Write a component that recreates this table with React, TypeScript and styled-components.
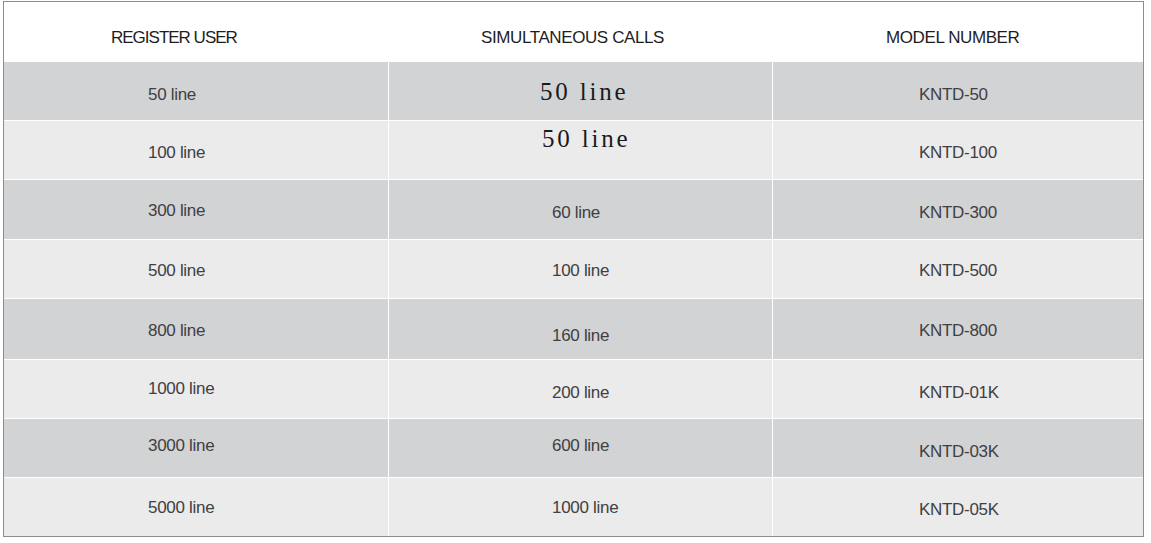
import { FC } from "react";
import styled, { createGlobalStyle } from "styled-components";

const GlobalStyle = createGlobalStyle`
  html, body {
    margin: 0;
    padding: 0;
    background: #ffffff;
  }
`;

type Tone = "dark" | "light";

const Page = styled.div({
  padding: "1px 0 0 3px",
});

const Table = styled.div({
  display: "grid",
  gridTemplateColumns: "384px 383px 370px",
  gridTemplateRows: "59px 58px 58px 59px 58px 60px 58px 58px 58px",
  gap: 1,
  width: 1139,
  backgroundColor: "#ffffff",
  border: "1px solid #8d8d8d",
});

const HeaderCell = styled.div<{ $left: number; $spacing: number }>(
  ({ $left, $spacing }) => ({
    display: "flex",
    alignItems: "flex-start",
    paddingTop: 26,
    paddingLeft: $left,
    backgroundColor: "#ffffff",
    fontFamily: '"Liberation Sans", Arial, sans-serif',
    fontSize: 17,
    lineHeight: "20px",
    letterSpacing: $spacing,
    color: "#1d1d1f",
    whiteSpace: "nowrap",
  })
);

const Cell = styled.div<{ $tone: Tone; $top: number; $left: number }>(
  ({ $tone, $top, $left }) => ({
    display: "flex",
    alignItems: "flex-start",
    paddingTop: $top,
    paddingLeft: $left,
    backgroundColor: $tone === "dark" ? "#d2d3d5" : "#ebebeb",
    whiteSpace: "nowrap",
  })
);

const Text = styled.span({
  fontFamily: '"Liberation Sans", Arial, sans-serif',
  fontSize: 17,
  lineHeight: "20px",
  letterSpacing: -0.3,
  color: "#404042",
});

const SerifText = styled.span({
  fontFamily: '"Liberation Serif", "Times New Roman", serif',
  fontSize: 25,
  lineHeight: "28px",
  letterSpacing: 2.8,
  color: "#1a1a1a",
});

type Entry = { text: string; top: number; left?: number; serif?: boolean };

type Row = [Entry, Entry, Entry];

const rows: Row[] = [
  [
    { text: "50 line", top: 23 },
    { text: "50 line", top: 16, left: 151, serif: true },
    { text: "KNTD-50", top: 23 },
  ],
  [
    { text: "100 line", top: 22 },
    { text: "50 line", top: 4, left: 153, serif: true },
    { text: "KNTD-100", top: 22 },
  ],
  [
    { text: "300 line", top: 21 },
    { text: "60 line", top: 23 },
    { text: "KNTD-300", top: 23 },
  ],
  [
    { text: "500 line", top: 21 },
    { text: "100 line", top: 21 },
    { text: "KNTD-500", top: 21 },
  ],
  [
    { text: "800 line", top: 22 },
    { text: "160 line", top: 27 },
    { text: "KNTD-800", top: 22 },
  ],
  [
    { text: "1000 line", top: 19 },
    { text: "200 line", top: 23 },
    { text: "KNTD-01K", top: 23 },
  ],
  [
    { text: "3000 line", top: 17 },
    { text: "600 line", top: 17 },
    { text: "KNTD-03K", top: 23 },
  ],
  [
    { text: "5000 line", top: 20 },
    { text: "1000 line", top: 20 },
    { text: "KNTD-05K", top: 22 },
  ],
];

const headers = [
  { label: "REGISTER USER", left: 107, spacing: -1 },
  { label: "SIMULTANEOUS CALLS", left: 92, spacing: -0.4 },
  { label: "MODEL NUMBER", left: 113, spacing: -0.4 },
];

const columnLeft = [144, 163, 146];

const App: FC = () => (
  <>
    <GlobalStyle />
    <Page>
      <Table>
        {headers.map((h) => (
          <HeaderCell key={h.label} $left={h.left} $spacing={h.spacing}>
            {h.label}
          </HeaderCell>
        ))}
        {rows.map((row, r) =>
          row.map((entry, c) => (
            <Cell
              key={`${r}-${c}`}
              $tone={r % 2 === 0 ? "dark" : "light"}
              $top={entry.top}
              $left={entry.left ?? columnLeft[c]}
            >
              {entry.serif ? (
                <SerifText>{entry.text}</SerifText>
              ) : (
                <Text>{entry.text}</Text>
              )}
            </Cell>
          ))
        )}
      </Table>
    </Page>
  </>
);

export default App;
